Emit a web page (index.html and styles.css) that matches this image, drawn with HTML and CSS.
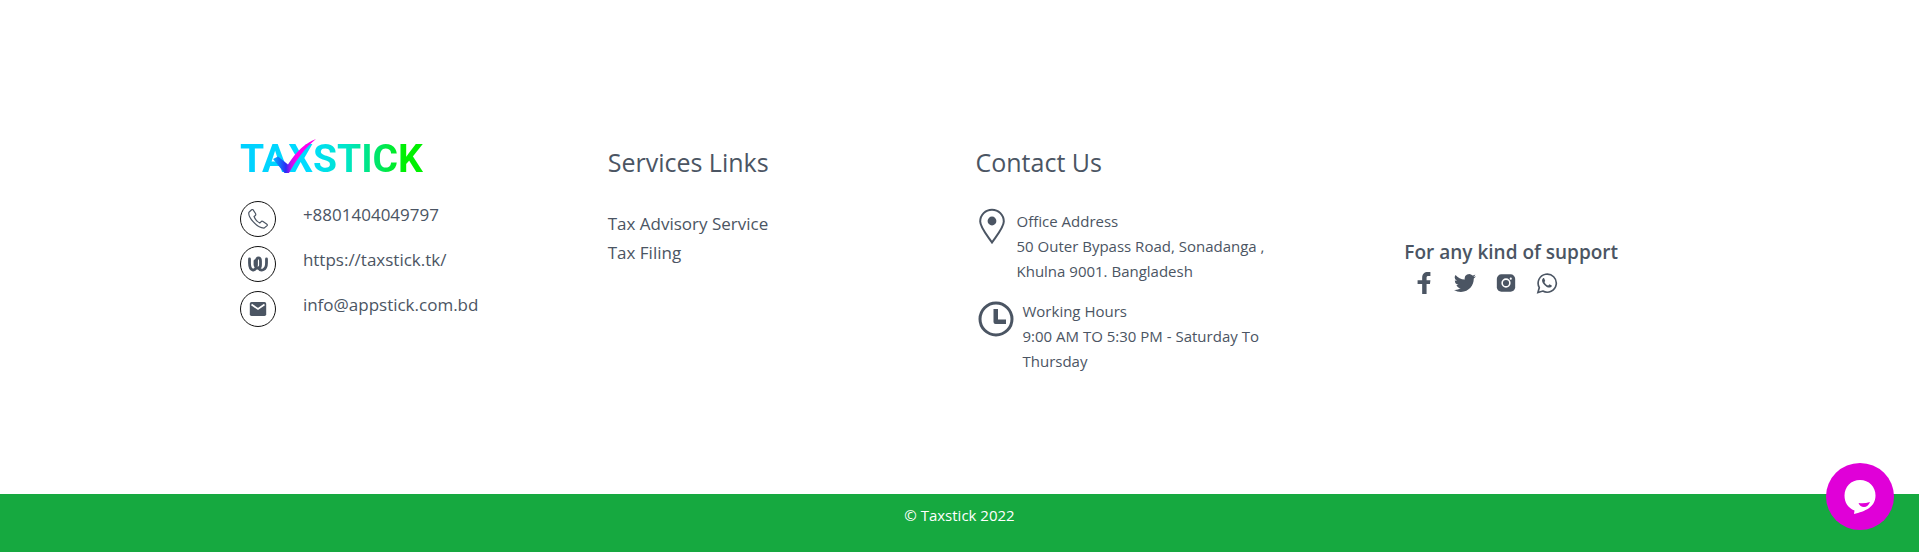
FILE: index.html
```html
<!DOCTYPE html>
<html lang="en">
<head>
<meta charset="utf-8">
<title>Taxstick</title>
<meta name="viewport" content="width=device-width, initial-scale=1">
<link rel="stylesheet" href="styles.css">
</head>
<body>
<footer>
  <div class="columns">
    <section class="brand">
      <a class="logo" href="#" aria-label="Taxstick home">
        <span class="logo-text">TAXSTICK</span>
        <svg class="logo-check" viewBox="0 0 44 36" aria-hidden="true">
          <defs><linearGradient id="check" x1="0" y1="0" x2="1" y2="0"><stop offset="0" stop-color="#00b4ff"/><stop offset=".3" stop-color="#2a2cf5"/><stop offset=".42" stop-color="#c010f0"/><stop offset=".55" stop-color="#ff00f0"/><stop offset="1" stop-color="#ff00e6"/></linearGradient></defs>
          <path fill="url(#check)" d="M0 20L5 17.500L15 25.500C23 13 32 4 43 0C32 9 23 21 16 34H11.500Z"/>
        </svg>
      </a>
      <ul class="reach">
        <li><span class="ring"><svg viewBox="0 0 20 20" class="line"><path d="M3.600 .8L.9 3.300C-.2 7.600 8.200 18.600 16 19.200L19.100 16.600C19.500 16 19.200 15.300 18.600 14.900L15 12.500C14.200 12 13.500 12.200 12.900 12.900L11.800 14C9.500 13 6.900 9.800 6.100 7.500L7.300 6.500C7.900 5.900 7.900 5.200 7.500 4.500L5.300 1.100C4.900 .5 4.200 .3 3.600 .8Z"/></svg></span><a href="#">+8801404049797</a></li>
        <li><span class="ring"><svg viewBox="0 0 20 20" class="weebly"><path d="M1.500 5V9C1.500 18 8.500 18 8.500 11V7C8.500 2.700 12.500 2.700 12.500 7V11C12.500 15 8 15.500 7 11V7"/><path d="M10.500 14C13 18 18.500 16 18.500 9V5"/></svg></span><a href="#">https://taxstick.tk/</a></li>
        <li><span class="ring"><svg viewBox="0 0 20 20"><path d="M3.500 3H16.500Q18.200 3 18.200 4.700V15.300Q18.200 17 16.500 17H3.500Q1.800 17 1.800 15.300V4.700Q1.800 3 3.500 3Z"/><path class="cut" d="M3.500 5.500L10 10L16.500 5.500"/></svg></span><a href="#">info@appstick.com.bd</a></li>
      </ul>
    </section>
    <section>
      <h2>Services Links</h2>
      <ul class="links">
        <li><a href="#">Tax Advisory Service</a></li>
        <li><a href="#">Tax Filing</a></li>
      </ul>
    </section>
    <section>
      <h2>Contact Us</h2>
      <div class="info">
        <svg class="pin" viewBox="0 0 32 36"><path class="stroke" d="M16 34.500C12 28.500 4.200 19.500 4.200 13.500A11.800 11.800 0 0 1 27.800 13.500C27.800 19.500 20 28.500 16 34.500Z"/><circle cx="16" cy="13" r="4.400"/></svg>
        <p>Office Address<br>50 Outer Bypass Road, Sonadanga ,<br>Khulna 9001. Bangladesh</p>
      </div>
      <div class="info hours">
        <svg class="clock" viewBox="0 0 36 36"><circle class="stroke thick" cx="18" cy="18" r="16"/><path d="M15.500 8H20V18.500H28V23H17.500Q15.500 23 15.500 21Z"/></svg>
        <p>Working Hours<br>9:00 AM TO 5:30 PM - Saturday To Thursday</p>
      </div>
    </section>
    <section class="support">
      <div>
        <h3>For any kind of support</h3>
        <div class="social">
          <a href="#" aria-label="Facebook"><svg viewBox="0 0 24 24"><path d="M10 24V13H5V9H10V6.500C10 2 12.500 0 16 0H19V4.300H17C15.200 4.300 14.800 5 14.800 6.500V9H19L18.500 13H14.800V24Z"/></svg></a>
          <a href="#" aria-label="Twitter"><svg viewBox="0 0 24 24"><path d="M23.950 4.570a10 10 0 0 1-2.820.77 4.960 4.960 0 0 0 2.160-2.720c-.95.550-2 .960-3.130 1.180a4.920 4.920 0 0 0-8.380 4.480C7.690 8.090 4.070 6.130 1.640 3.160a4.900 4.900 0 0 0 1.520 6.570 4.900 4.900 0 0 1-2.230-.61v.06a4.920 4.920 0 0 0 3.950 4.830 5 5 0 0 1-2.210.08 4.940 4.940 0 0 0 4.600 3.420A9.870 9.870 0 0 1 0 19.540a14 14 0 0 0 7.550 2.210c9.050 0 14-7.500 14-13.980v-.64a9.900 9.900 0 0 0 2.400-2.560z"/></svg></a>
          <a href="#" aria-label="Instagram"><svg viewBox="0 0 24 24"><rect x="2" y="2.500" width="20" height="19" rx="5"/><circle class="cut" cx="12" cy="12" r="4.200"/><circle class="dot" cx="17.200" cy="7.300" r="1.200"/></svg></a>
          <a href="#" aria-label="WhatsApp"><svg viewBox="0 0 24 24"><path class="stroke thin" d="M2.100 22.300L3.600 17A9.900 9.900 0 1 1 7.400 20.800Z"/><path d="M8.900 6.900C8.500 6.300 7.900 6.600 7.500 7C5.500 9.200 7.300 12.200 9.200 14.200C11.200 16.400 13.900 17.700 16 16.700C17.100 16.100 17.300 15.200 17.200 14.600L14.700 13.300C14 13.800 13.600 14.900 13 14.700C11.500 14.200 9.900 12.500 9.300 11.200C9.100 10.700 10 10.300 10 9.600Z"/></svg></a>
        </div>
      </div>
    </section>
  </div>
  <div class="bar">© Taxstick 2022</div>
</footer>
<button class="chat" type="button" aria-label="Open chat">
  <svg viewBox="0 0 34 36"><path class="bubble" d="M17 1C26 1 32.500 7.800 32.500 16.500C32.500 28 22 32.500 11 35L11.500 31.500C5 29 1.500 23.500 1.500 16.500C1.500 7.800 8 1 17 1Z"/><path class="smile" d="M15.500 24Q21 25 27 23Q25 28 21 28Q17 28 15.500 24Z"/></svg>
</button>
</body>
</html>
```
FILE: styles.css
```css
* { box-sizing: border-box; }
body {
  margin: 0;
  background: #fff;
  color: #4b5563;
  font-family: "Open Sans", "Noto Sans", sans-serif;
  font-size: 17px;
}
h2, h3, p, ul { margin: 0; padding: 0; }
ul { list-style: none; }
a { color: inherit; text-decoration: none; }
svg { display: block; fill: currentColor; }

.columns {
  width: 75%;
  margin: 0 auto;
  padding: 136px 0 120px;
  display: grid;
  grid-template-columns: repeat(4, 1fr);
  gap: 32px;
}
.logo { display: block; position: relative; width: max-content; }
.logo-text {
  display: block;
  font: 700 39px/46px Roboto, sans-serif;
  background: linear-gradient(90deg, #00d0ff 0%, #00dcff 38%, #00e6c8 58%, #00e664 76%, #00f000 90%);
  background-clip: text;
  -webkit-background-clip: text;
  color: transparent;
}
.logo-check { position: absolute; left: 33px; top: 3px; width: 44px; height: 36px; }
.reach { padding-top: 19px; display: grid; gap: 9px; }
.reach li { display: flex; gap: 27px; }
.reach a { line-height: 28px; }
.ring {
  width: 36px;
  height: 36px;
  border: 1px solid #111;
  border-radius: 50%;
  display: grid;
  place-items: center;
}
.ring svg { width: 20px; height: 20px; }
.line, .weebly, .stroke, .cut { fill: none; stroke: currentColor; }
.line { stroke-width: 1.2; }
.weebly { stroke-width: 2.8; stroke-linecap: round; }
.stroke { stroke-width: 2; }
.thin { stroke-width: 1.8; }
.thick { stroke-width: 3; }
.cut { stroke: #fff; stroke-width: 1.7; }
.dot { fill: #fff; }

h2 { padding-top: 6px; font-size: 25px; font-weight: 400; line-height: 40px; }
.links { padding-top: 27px; line-height: 29px; }
.info { display: flex; gap: 9px; padding-top: 26px; font-size: 15px; line-height: 25px; }
.info p { padding-top: 1px; }
.pin { width: 32px; height: 36px; flex: none; }
.clock { width: 36px; height: 36px; margin: 3px 0 0 2px; flex: none; }
.hours { padding-top: 14px; }

.support { display: grid; place-items: center; padding-top: 22px; }
h3 { font-size: 19px; font-weight: 600; line-height: 28px; }
.social { display: flex; gap: 19px; padding: 6px 0 0 9px; }
.social svg { width: 22px; height: 22px; }

.bar {
  min-height: 58px;
  padding-top: 9px;
  background: #16a940;
  color: #fff;
  text-align: center;
  font-size: 15px;
  line-height: 24px;
}
.chat {
  position: fixed;
  right: 25px;
  bottom: 22px;
  width: 68px;
  height: 67px;
  padding: 0;
  border: 0;
  border-radius: 50%;
  background: #e000d8;
  color: #fff;
  display: grid;
  place-items: center;
}
.chat svg { width: 34px; height: 36px; }
.smile { fill: #e000d8; }
```
